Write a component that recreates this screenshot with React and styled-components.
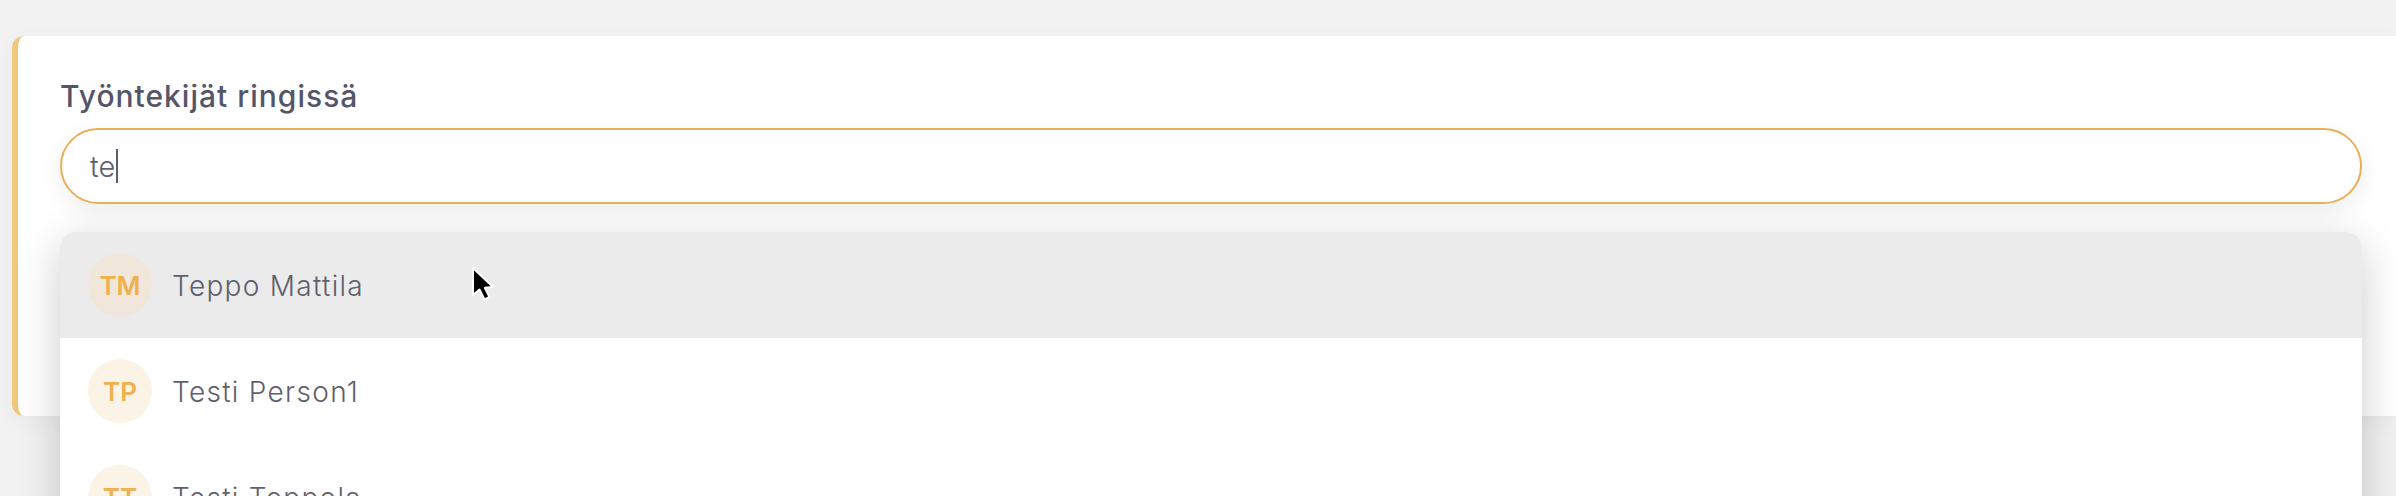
import React from 'react';
import styled, { createGlobalStyle } from 'styled-components';

const GlobalStyle = createGlobalStyle`
  html, body {
    margin: 0;
    height: 100%;
    background: #f3f3f3;
    overflow: hidden;
  }
`;

const Page = styled.div`
  height: 496px;
  padding: 36px 0 0 12px;
  box-sizing: border-box;
  background: #f2f2f2;
  font-family: Inter, "Open Sans", sans-serif;
  overflow: hidden;
  position: relative;
`;

const Card = styled.section`
  height: 380px;
  box-sizing: border-box;
  padding: 42px 34px 0 42px;
  background: #fff;
  border-left: 6px solid #f0c77c;
  border-radius: 12px 0 0 12px;
  box-shadow: 0 6px 24px rgba(0, 0, 0, 0.04);
`;

const Field = styled.div`
  position: relative;
`;

const Label = styled.label`
  display: block;
  height: 50px;
  font-size: 30px;
  line-height: 36px;
  font-weight: 500;
  letter-spacing: 1px;
  color: #55556a;
`;

const SearchBox = styled.div`
  height: 76px;
  box-sizing: border-box;
  display: flex;
  align-items: center;
  padding-left: 28px;
  background: #fff;
  border: 2px solid #e9b05a;
  border-radius: 38px;
  box-shadow: 0 8px 24px rgba(0, 0, 0, 0.07);
  font-size: 29px;
  font-weight: 300;
  color: #5f5f6e;
`;

const Caret = styled.span`
  width: 2px;
  height: 34px;
  margin-left: 1px;
  background: #5c5c70;
`;

const Dropdown = styled.ul`
  position: absolute;
  top: 154px;
  left: 0;
  right: 0;
  margin: 0;
  padding: 0;
  list-style: none;
  background: #fff;
  border-radius: 16px 16px 0 0;
  box-shadow: 0 12px 44px rgba(0, 0, 0, 0.2);
  overflow: hidden;
`;

const Row = styled.li`
  height: 106px;
  display: flex;
  align-items: center;
  gap: 20px;
  padding-left: 28px;
  background: ${(p) => (p.$active ? '#ebebeb' : '#fff')};
`;

const Avatar = styled.span`
  width: 64px;
  height: 64px;
  border-radius: 50%;
  display: flex;
  align-items: center;
  justify-content: center;
  background: ${(p) => (p.$active ? '#f0e6da' : '#fbf3e6')};
  color: #efb04e;
  font-size: 26px;
  font-weight: 600;
`;

const Name = styled.span`
  padding-top: 2px;
  font-size: 28px;
  font-weight: 300;
  letter-spacing: 1.3px;
  color: #5f5f6e;
`;

const Pointer = styled.svg`
  position: absolute;
  left: 469px;
  top: 264px;
  width: 30px;
  height: 40px;
`;

const people = [
  { initials: 'TM', name: 'Teppo Mattila', active: true },
  { initials: 'TP', name: 'Testi Person1' },
  { initials: 'TT', name: 'Testi Teppola' },
];

export default function App() {
  return (
    <Page>
      <GlobalStyle />
      <Card>
        <Field>
          <Label>Työntekijät ringissä</Label>
          <SearchBox>
            te
            <Caret />
          </SearchBox>
          <Dropdown>
            {people.map((person) => (
              <Row key={person.name} $active={person.active}>
                <Avatar $active={person.active}>{person.initials}</Avatar>
                <Name>{person.name}</Name>
              </Row>
            ))}
          </Dropdown>
        </Field>
      </Card>
      <Pointer viewBox="0 0 30 40">
        <path
          d="M4 4 L4 31 L10.5 25.5 L15.5 35.5 L20.5 33 L15.8 23.8 L24 23 Z"
          fill="#000"
          stroke="#fff"
          strokeWidth="2"
          strokeLinejoin="round"
        />
      </Pointer>
    </Page>
  );
}
